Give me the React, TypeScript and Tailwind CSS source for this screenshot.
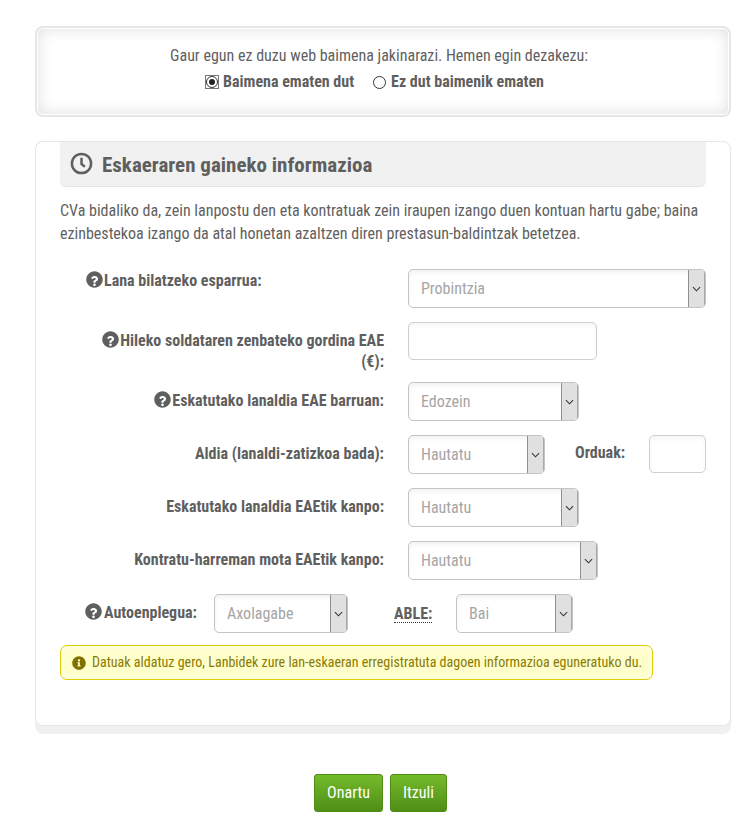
import React from "react";

const font = "[font-family:Roboto,'Liberation_Sans',sans-serif] [font-stretch:condensed]";

function Select({ text, w }: { text: string; w: string }) {
  return (
    <div className={`${w} h-[39px] flex rounded-[5px] border border-[#c4c4c4] bg-white shadow-[inset_0_3px_4px_rgba(0,0,0,0.05)] overflow-hidden`}>
      <div className="flex-1 pl-3 text-[16px] leading-[37px] text-[#a5a5a5]">{text}</div>
      <div className="w-[17px] bg-[#e0e0e0] border-l border-[#8f8f8f] border-r border-r-[#a8a8a8] flex items-center justify-center">
        <svg viewBox="0 0 10 6" className="w-[9px] h-[6px] fill-none stroke-[#333] stroke-[1.2]"><path d="M1 1l4 4 4-4" /></svg>
      </div>
    </div>
  );
}

function Input({ w }: { w: string }) {
  return <div className={`${w} h-[38px] rounded-[5px] border border-[#cfcfcf] bg-white shadow-[inset_0_3px_4px_rgba(0,0,0,0.04)]`} />;
}

function HelpInline() {
  return (
    <svg viewBox="0 0 512 512" className="inline-block align-[-2px] w-[17px] h-[17px] mr-[1px] fill-[#5f5f5f]">
      <path d="M256 8C119 8 8 119 8 256s111 248 248 248 248-111 248-248S393 8 256 8zm0 448c-22 0-40-18-40-40s18-40 40-40 40 18 40 40-18 40-40 40zm54-150c-16 9-18 15-18 26v8c0 7-5 12-12 12h-48c-7 0-12-5-12-12v-12c0-35 27-49 47-60 17-10 28-16 28-29 0-17-22-28-39-28-23 0-33 11-48 29-4 5-11 6-16 2l-29-22c-5-4-6-11-3-16 24-36 55-56 102-56 49 0 102 38 102 88 0 66-54 71-54 70z" />
    </svg>
  );
}

function Row({ label, help, children, mt, first }: { label: string; help?: boolean; children: React.ReactNode; mt: string; first?: boolean }) {
  return (
    <div className={`flex ${mt}`}>
      <div
        className={
          first
            ? "w-[324px] shrink-0 pl-[26px] pt-[1px] text-left text-[16px] leading-[21px] font-bold text-[#5f5f5f]"
            : "w-[324px] shrink-0 pl-[24px] pt-[8px] text-right text-[16px] leading-[21px] font-bold text-[#5f5f5f]"
        }
      >
        {help && <HelpInline />}
        {label}
      </div>
      <div className="ml-[24px] flex-1">{children}</div>
    </div>
  );
}

export default function App() {
  return (
    <div className={`${font} w-[747px] h-[826px] bg-white pt-[26px] pl-[35px] text-[#5f5f5f] overflow-hidden`}>
      <div className="w-[696px] h-[91px] rounded-[8px] border-2 border-[#e6e6e6] shadow-[inset_0_0_0_1px_#ffffff,inset_0_0_16px_rgba(0,0,0,0.14)] text-center pt-[16px] pr-[8px]">
        <div className="text-[16px] leading-[24px]">Gaur egun ez duzu web baimena jakinarazi. Hemen egin dezakezu:</div>
        <div className="flex justify-center items-center mt-[2px] pr-[9px] text-[16px] leading-[24px] font-bold">
          <span className="w-[14px] h-[14px] border border-[#777] flex items-center justify-center mr-[4px]">
            <span className="w-[12px] h-[12px] rounded-full border border-[#333] bg-white flex items-center justify-center">
              <span className="w-[6px] h-[6px] rounded-full bg-[#222]" />
            </span>
          </span>
          <span>Baimena ematen dut</span>
          <span className="w-[13px] h-[13px] rounded-full border border-[#333] bg-white ml-[19px] mr-[5px]" />
          <span>Ez dut baimenik ematen</span>
        </div>
      </div>

      <div className="mt-[24px] w-[696px] h-[593px] rounded-[8px] bg-[#f0f0f0]">
        <div className="h-[585px] rounded-[8px] bg-white border border-[#e6e6e6] px-[24px]">
          <div className="h-[45px] bg-[#f1f1f1] border-b border-[#e4e4e4] rounded-b-[6px] flex items-center pl-[10px]">
            <svg viewBox="0 0 24 24" className="w-[23px] h-[23px] fill-none stroke-[#5f5f5f] stroke-[2.6] mb-[2px]">
              <circle cx="12" cy="12" r="10" />
              <path d="M12 6v6.5l3.5 3" />
            </svg>
            <span className="ml-[9px] mt-[3px] text-[21px] font-bold text-[#5f5f5f]">Eskaeraren gaineko informazioa</span>
          </div>
          <p className="mt-[12px] text-[16px] leading-[23px]">
            CVa bidaliko da, zein lanpostu den eta kontratuak zein iraupen izango duen kontuan hartu gabe; baina ezinbestekoa izango da atal honetan azaltzen diren prestasun-baldintzak betetzea.
          </p>

          <Row first mt="mt-[24px]" label="Lana bilatzeko esparrua:" help>
            <Select text="Probintzia" w="w-[298px]" />
          </Row>
          <Row mt="mt-[14px]" label="Hileko soldataren zenbateko gordina EAE (€):" help>
            <Input w="w-[189px]" />
          </Row>
          <Row mt="mt-[10px]" label="Eskatutako lanaldia EAE barruan:" help>
            <Select text="Edozein" w="w-[171px]" />
          </Row>
          <Row mt="mt-[14px]" label="Aldia (lanaldi-zatizkoa bada):">
            <div className="flex">
              <Select text="Hautatu" w="w-[137px]" />
              <span className="ml-[30px] mt-[7px] text-[16px] leading-[21px] font-bold">Orduak:</span>
              <div className="ml-[24px]"><Input w="w-[57px]" /></div>
            </div>
          </Row>
          <Row mt="mt-[14px]" label="Eskatutako lanaldia EAEtik kanpo:">
            <Select text="Hautatu" w="w-[171px]" />
          </Row>
          <Row mt="mt-[14px]" label="Kontratu-harreman mota EAEtik kanpo:">
            <Select text="Hautatu" w="w-[190px]" />
          </Row>
          <div className="flex mt-[14px]">
            <div className="ml-[25px] w-[129px] shrink-0 pt-[8px] text-[16px] leading-[21px] font-bold">
              <HelpInline /><span className="ml-[1px]">Autoenplegua:</span>
            </div>
            <Select text="Axolagabe" w="w-[134px]" />
            <span className="ml-[46px] w-[62px] shrink-0 pt-[9px] text-[16px] leading-[21px] font-bold">
              <span className="inline-block leading-[16px] border-b border-dotted border-[#333]">ABLE:</span>
            </span>
            <Select text="Bai" w="w-[117px]" />
          </div>

          <div className="mt-[12px] w-[593px] h-[35px] rounded-[7px] border border-[#e0cd00] bg-[#ffffcc] shadow-[inset_0_0_6px_rgba(255,255,255,0.8)] flex items-center pl-[11px] text-[14px] text-[#8a7a00]">
            <svg viewBox="0 0 512 512" className="w-[14px] h-[14px] fill-[#7f7000] shrink-0 mr-[6px]">
              <path d="M256 8C119 8 8 119 8 256s111 248 248 248 248-111 248-248S393 8 256 8zm0 110c23 0 42 19 42 42s-19 42-42 42-42-19-42-42 19-42 42-42zm56 254c0 7-5 12-12 12h-88c-7 0-12-5-12-12v-24c0-7 5-12 12-12h12v-64h-12c-7 0-12-5-12-12v-24c0-7 5-12 12-12h64c7 0 12 5 12 12v100h12c7 0 12 5 12 12v24z" />
            </svg>
            Datuak aldatuz gero, Lanbidek zure lan-eskaeran erregistratuta dagoen informazioa eguneratuko du.
          </div>
        </div>
      </div>

      <div className="mt-[40px] flex pl-[279px] gap-[7px]">
        <div className="w-[69px] h-[38px] rounded-[3px] border border-[#4f8c14] bg-gradient-to-b from-[#74bb2a] to-[#4f8f17] text-white text-[16px] leading-[36px] text-center">Onartu</div>
        <div className="w-[57px] h-[38px] rounded-[3px] border border-[#4f8c14] bg-gradient-to-b from-[#74bb2a] to-[#4f8f17] text-white text-[16px] leading-[36px] text-center">Itzuli</div>
      </div>
    </div>
  );
}
